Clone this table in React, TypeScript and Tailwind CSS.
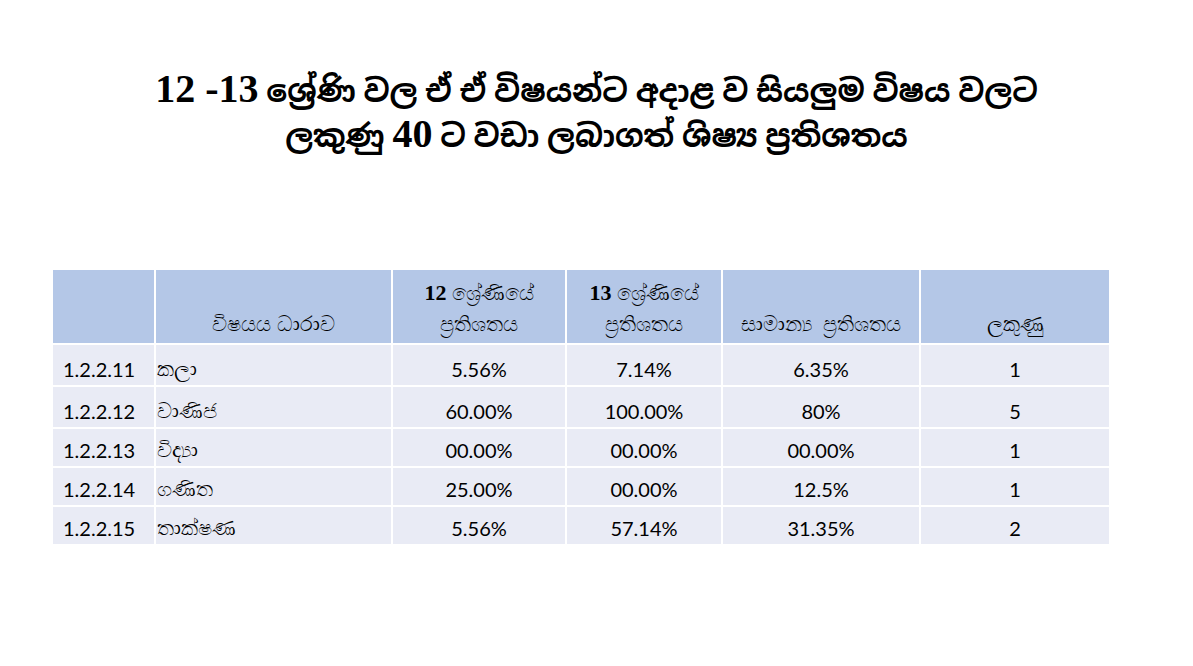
const rows = [
  ['1.2.2.11', 'කලා', '5.56%', '7.14%', '6.35%', '1'],
  ['1.2.2.12', 'වාණිජ', '60.00%', '100.00%', '80%', '5'],
  ['1.2.2.13', 'විද්‍යා', '00.00%', '00.00%', '00.00%', '1'],
  ['1.2.2.14', 'ගණිත', '25.00%', '00.00%', '12.5%', '1'],
  ['1.2.2.15', 'තාක්ෂණ', '5.56%', '57.14%', '31.35%', '2'],
];

const rowHeights = ['h-[40px]', 'h-[40px]', 'h-[37px]', 'h-[37px]', 'h-[37px]'];

export default function App() {
  return (
    <div className="w-[1193px] h-[666px] bg-white overflow-hidden">
      <h1 className="pt-[68px] text-center font-bold text-[31px] leading-[42px] text-black font-['Liberation_Serif','Noto_Sans_Sinhala',serif]">
        <span className="text-[40px]">12 -13</span> ශ්‍රේණි වල ඒ ඒ විෂයන්ට අදාළ ව සියලුම විෂය වලට
        <br />
        ලකුණු <span className="text-[40px]">40</span> ට වඩා ලබාගත් ශිෂ්‍ය ප්‍රතිශතය
      </h1>

      <div className="mt-[112px] ml-[53px] w-[1056px] font-['Lato','Noto_Sans',sans-serif] text-[20px] text-black">
        <div className="grid grid-cols-[101px_235px_172px_154px_196px_188px] gap-x-[2px] bg-white">
          <div className="h-[73px] bg-[#b4c7e7]" />
          <div className="h-[73px] bg-[#b4c7e7] flex items-end justify-center pb-[3px] text-[21px] font-['Liberation_Serif',serif]">
            විෂයය ධාරාව
          </div>
          <div className="h-[73px] bg-[#b4c7e7] flex flex-col items-center justify-end pb-[3px] text-[21px] leading-[31px] font-['Liberation_Serif',serif]">
            <span>
              <b className="text-[22px]">12</b> ශ්‍රේණියේ
            </span>
            <span>ප්‍රතිශතය</span>
          </div>
          <div className="h-[73px] bg-[#b4c7e7] flex flex-col items-center justify-end pb-[3px] text-[21px] leading-[31px] font-['Liberation_Serif',serif]">
            <span>
              <b className="text-[22px]">13</b> ශ්‍රේණියේ
            </span>
            <span>ප්‍රතිශතය</span>
          </div>
          <div className="h-[73px] bg-[#b4c7e7] flex items-end justify-center pb-[3px] text-[21px] font-['Liberation_Serif',serif]">
            සාමාන්‍ය&nbsp; ප්‍රතිශතය
          </div>
          <div className="h-[73px] bg-[#b4c7e7] flex items-end justify-center pb-[3px] text-[21px] font-['Liberation_Serif',serif]">
            ලකුණු
          </div>
        </div>

        {rows.map((r, i) => (
          <div
            key={r[0]}
            className="grid grid-cols-[101px_235px_172px_154px_196px_188px] gap-x-[2px] border-t-2 border-white"
          >
            <div className={`${rowHeights[i]} bg-[#e9ebf5] flex items-end pb-[1px] pl-[10px]`}>{r[0]}</div>
            <div className={`${rowHeights[i]} bg-[#e9ebf5] flex items-end pb-0 pl-[1px] text-[21px] font-['Liberation_Serif',serif]`}>
              {r[1]}
            </div>
            <div className={`${rowHeights[i]} bg-[#e9ebf5] flex items-end justify-center pb-[1px]`}>{r[2]}</div>
            <div className={`${rowHeights[i]} bg-[#e9ebf5] flex items-end justify-center pb-[1px]`}>{r[3]}</div>
            <div className={`${rowHeights[i]} bg-[#e9ebf5] flex items-end justify-center pb-[1px]`}>{r[4]}</div>
            <div className={`${rowHeights[i]} bg-[#e9ebf5] flex items-end justify-center pb-[1px]`}>{r[5]}</div>
          </div>
        ))}
      </div>
    </div>
  );
}
